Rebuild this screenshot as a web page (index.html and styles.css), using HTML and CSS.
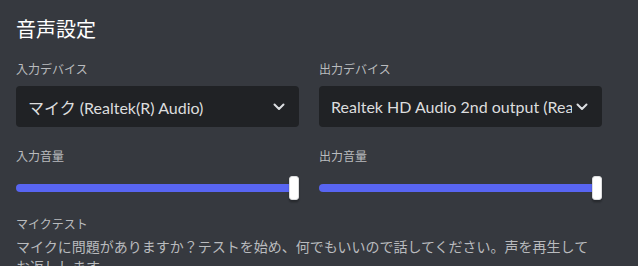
FILE: index.html
```html
<!DOCTYPE html>
<html lang="ja">
<head>
<meta charset="utf-8">
<link rel="stylesheet" href="styles.css">
</head>
<body>
<div class="page">
  <h2 class="title">音声設定</h2>
  <div class="grid">
    <div class="col">
      <div class="label">入力デバイス</div>
      <div class="select">
        <span class="value">マイク (Realtek(R) Audio)</span>
        <svg class="chev" width="12" height="8" viewBox="0 0 12 8"><path d="M1.5 1.5 L6 6 L10.5 1.5" fill="none" stroke="#dbdee1" stroke-width="2" stroke-linecap="round" stroke-linejoin="round"/></svg>
      </div>
    </div>
    <div class="col">
      <div class="label">出力デバイス</div>
      <div class="select">
        <span class="value">Realtek HD Audio 2nd output (Realtek(R) Audio)</span>
        <svg class="chev" width="12" height="8" viewBox="0 0 12 8"><path d="M1.5 1.5 L6 6 L10.5 1.5" fill="none" stroke="#dbdee1" stroke-width="2" stroke-linecap="round" stroke-linejoin="round"/></svg>
      </div>
    </div>
    <div class="col">
      <div class="label">入力音量</div>
      <div class="slider"><div class="track"></div><div class="thumb"></div></div>
    </div>
    <div class="col">
      <div class="label">出力音量</div>
      <div class="slider"><div class="track"></div><div class="thumb"></div></div>
    </div>
  </div>
  <div class="test">
    <div class="label">マイクテスト</div>
    <p class="desc">マイクに問題がありますか？テストを始め、何でもいいので話してください。声を再生してお返しします。</p>
  </div>
</div>
</body>
</html>
```
FILE: styles.css
```css
html, body {
  margin: 0;
  padding: 0;
  background: #36393f;
  overflow: hidden;
}
body {
  font-family: "Lato", "Noto Sans CJK JP", sans-serif;
  color: #dcddde;
}
.page {
  width: 585px;
  padding: 16px 0 0 16px;
}
.title {
  margin: 0 0 20px 0;
  font-size: 20px;
  line-height: 26px;
  font-weight: 400;
  color: #ffffff;
}
.grid {
  display: grid;
  grid-template-columns: 283px 283px;
  column-gap: 20px;
  row-gap: 22px;
}
.label {
  font-size: 12px;
  line-height: 16px;
  color: #b9bbbe;
  margin-bottom: 8px;
}
.select {
  height: 41px;
  box-sizing: border-box;
  background: #202225;
  border-radius: 4px;
  display: flex;
  align-items: center;
  padding: 0 14px 0 12px;
  gap: 4px;
}
.value {
  flex: 1;
  overflow: hidden;
  white-space: nowrap;
  font-size: 16px;
  color: #dcddde;
}
.chev {
  flex: none;
  display: block;
}
.slider {
  position: relative;
  height: 24px;
  margin-top: 11px;
  display: flex;
  align-items: center;
}
.track {
  width: 100%;
  height: 8px;
  border-radius: 4px;
  background: #5865f2;
}
.thumb {
  position: absolute;
  right: 0;
  top: 0;
  width: 10px;
  height: 24px;
  box-sizing: border-box;
  background: #ffffff;
  border: 1px solid #dcddde;
  border-radius: 3px;
  box-shadow: 0 3px 1px rgba(0,0,0,0.08), 0 2px 2px rgba(0,0,0,0.2);
}
.test {
  margin-top: 17px;
}
.test .label {
  margin-bottom: 4px;
}
.desc {
  margin: 0;
  font-size: 14px;
  line-height: 20px;
  color: #b9bbbe;
}
```
